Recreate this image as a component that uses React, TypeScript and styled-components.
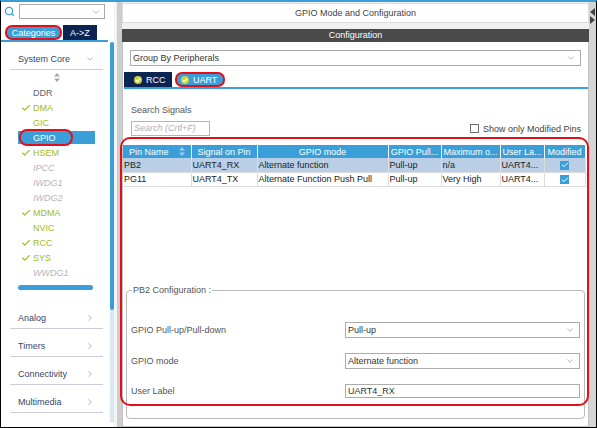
import styled, { createGlobalStyle, css } from 'styled-components';
import { Search, ChevronDown, ChevronRight, Check } from 'lucide-react';

const BLUE = '#3a9fd8';
const NAVY = '#0c2451';
const RED = '#e3101b';
const GREEN = '#9fba22';

const GlobalStyle = createGlobalStyle`
  body {
    margin: 0;
    font-family: "Liberation Sans", Arial, sans-serif;
    font-size: 9px;
  }
  * { box-sizing: border-box; }
`;

const Frame = styled.div`
  width: 597px;
  height: 428px;
  border: 1px solid #000;
  border-top: 2px solid ${BLUE};
  display: flex;
  background: #fff;
  overflow: hidden;
  color: #333;
`;

/* ---------- sidebar ---------- */

const Sidebar = styled.aside`
  width: 113px;
  flex-shrink: 0;
  display: flex;
  flex-direction: column;
`;

const SearchRow = styled.div`
  display: flex;
  align-items: center;
  gap: 4px;
  height: 17px;
  padding: 2px 0 0 3px;
`;

const SearchBox = styled.div`
  width: 86px;
  height: 15px;
  border: 1px solid #a9a9a9;
  display: flex;
  align-items: center;
  justify-content: flex-end;
  padding-right: 3px;
`;

const TabRow = styled.div`
  margin-top: 6px;
  width: 107px;
  display: flex;
  gap: 1px;
  padding-left: 4px;
  border-bottom: 2px solid ${BLUE};
`;

const SideTab = styled.div<{ $w: number; $active?: boolean; $marked?: boolean }>`
  width: ${p => p.$w}px;
  height: 15px;
  display: flex;
  align-items: center;
  justify-content: center;
  color: #fff;
  background: ${p => (p.$active ? BLUE : NAVY)};
  ${p =>
    p.$marked &&
    css`
      border: 2px solid ${RED};
      border-radius: 7px;
    `}
`;

const SideBody = styled.div`
  flex: 1;
  display: flex;
  min-height: 0;
`;

const SideList = styled.div`
  width: 107px;
  display: flex;
  flex-direction: column;
`;

const ScrollTrack = styled.div`
  width: 4px;
  margin: 0 0 4px 2px;
  background: #d7e7f3;
  border-radius: 2px;
`;

const ScrollThumb = styled.div`
  height: 268px;
  background: ${BLUE};
  border-radius: 2px;
`;

const GroupHeader = styled.div`
  height: 28px;
  margin: 0 5px 0 9px;
  padding: 6px 8px 0 8px;
  display: flex;
  align-items: center;
  justify-content: space-between;
  border-bottom: 1px solid #c9ced8;
  color: #37456a;
`;

const SortRow = styled.div`
  height: 15px;
  display: flex;
  align-items: center;
  justify-content: center;
  padding-left: 5px;
`;

type Tone = 'green' | 'gray' | 'off';

const Item = styled.div<{ $tone: Tone; $selected?: boolean }>`
  position: relative;
  height: 15px;
  width: 77px;
  margin-left: 17px;
  padding-left: 3px;
  display: flex;
  align-items: center;
  color: ${p => (p.$tone === 'green' ? GREEN : p.$tone === 'gray' ? '#5d6472' : '#b3b6bc')};
  font-style: ${p => (p.$tone === 'off' ? 'italic' : 'normal')};
  ${p =>
    p.$selected &&
    css`
      height: 13px;
      margin: 1px 0 1px 17px;
      background: ${BLUE};
      color: #fff;
      &::after {
        content: '';
        position: absolute;
        left: 1px;
        top: -2px;
        bottom: -2px;
        width: 50px;
        border: 2px solid ${RED};
        border-radius: 8px;
      }
    `}
`;

const CheckSlot = styled.span`
  width: 12px;
  display: flex;
  align-items: center;
`;

const HBar = styled.div`
  margin: 5px 0 11px 17px;
  width: 75px;
  height: 5px;
  border-radius: 3px;
  background: ${BLUE};
`;

const Splitter = styled.div`
  width: 8px;
  flex-shrink: 0;
  border-left: 3px solid #f4f4f4;
  background: #cdcdcd;
`;

/* ---------- main ---------- */

const MainCol = styled.main`
  flex: 1;
  display: flex;
  flex-direction: column;
  background: #f1f1f1;
`;

const TitleBar = styled.div`
  margin-top: 1px;
  height: 20px;
  background: #fff;
  border: 1px solid #dcdcdc;
  display: flex;
  align-items: center;
  justify-content: center;
  color: #444;
`;

const ConfigHead = styled.div`
  margin-top: 6px;
  height: 13px;
  background: #4a4a4a;
  color: #fff;
  text-align: center;
  line-height: 13px;
`;

const ConfigBody = styled.section`
  flex: 1;
  position: relative;
  display: flex;
  flex-direction: column;
  background: #fff;
  border: 1px solid #c3c3c3;
  border-top: 0;
`;

const SelectBox = styled.div<{ $h?: number }>`
  height: ${p => p.$h ?? 16}px;
  border: 1px solid #acacac;
  background: #fff;
  display: flex;
  align-items: center;
  justify-content: space-between;
  padding: 0 4px 0 2px;
  color: #333;
`;

const GroupSelect = styled(SelectBox)`
  margin: 8px 7px 0 7px;
`;

const PeriphTabs = styled.div`
  margin: 6px 0 0 1px;
  display: flex;
  gap: 3px;
  border-bottom: 2px solid ${BLUE};
`;

const PTab = styled.div<{ $active?: boolean; $marked?: boolean; $pad: number }>`
  width: ${p => (p.$marked ? 50 : 48)}px;
  height: 15px;
  display: flex;
  align-items: center;
  gap: 4px;
  padding-left: ${p => p.$pad}px;
  color: #fff;
  background: ${p => (p.$active ? BLUE : NAVY)};
  ${p =>
    p.$marked &&
    css`
      border: 2px solid ${RED};
      border-radius: 7px;
    `}
`;

const SearchArea = styled.div`
  margin-top: 15px;
  padding: 0 7px 0 8px;
  display: flex;
  justify-content: space-between;
  align-items: flex-end;
`;

const SearchLabel = styled.div`
  line-height: 12px;
  color: #555;
`;

const SearchInput = styled.div`
  margin-top: 5px;
  width: 79px;
  height: 15px;
  border: 1px solid #b5b5b5;
  padding-left: 2px;
  line-height: 13px;
  color: #b0b0b0;
  font-style: italic;
`;

const CheckLabel = styled.div`
  height: 15px;
  display: flex;
  align-items: center;
  gap: 4px;
  color: #444;
`;

const EmptyBox = styled.span`
  width: 9px;
  height: 9px;
  border: 1px solid #6e6e6e;
  background: #fff;
`;

const Grid = styled.table`
  margin-top: 9px;
  width: 462px;
  border-collapse: collapse;
  table-layout: fixed;
`;

const Th = styled.th`
  height: 13px;
  padding: 0 2px;
  background: ${BLUE};
  color: #fff;
  font-weight: normal;
  text-align: center;
  border-right: 1px solid #fff;
  white-space: nowrap;
  overflow: hidden;
`;

const HeadInner = styled.span`
  display: inline-flex;
  align-items: center;
  gap: 10px;
`;

const Tr = styled.tr<{ $selected?: boolean }>`
  background: ${p => (p.$selected ? '#bacfe6' : '#fff')};
`;

const Td = styled.td<{ $center?: boolean }>`
  height: 14px;
  padding: 0 1px;
  border-right: 1px solid #dcdcdc;
  border-bottom: 1px solid #dcdcdc;
  white-space: nowrap;
  overflow: hidden;
  color: #222;
  text-align: ${p => (p.$center ? 'center' : 'left')};
`;

const BlueCheck = styled.span`
  display: inline-flex;
  align-items: center;
  justify-content: center;
  width: 9px;
  height: 9px;
  background: ${BLUE};
  vertical-align: middle;
`;

const Fieldset = styled.fieldset`
  margin: auto 3px 7px 3px;
  border: 1px solid #b9b9b9;
  border-radius: 4px;
  padding: 26px 4px 20px 4px;
  display: flex;
  flex-direction: column;
  gap: 15px;
`;

const Legend = styled.legend`
  margin-left: 1px;
  padding: 0 1px;
  line-height: 12px;
  color: #555;
`;

const FieldRow = styled.div`
  display: flex;
  align-items: center;
`;

const FieldLabel = styled.span`
  width: 214px;
  color: #555;
`;

const TextField = styled(SelectBox)`
  flex: 1;
`;

const RedFrame = styled.div`
  position: absolute;
  left: -3px;
  top: 95px;
  width: 469px;
  height: 269px;
  border: 2px solid ${RED};
  border-radius: 10px;
  pointer-events: none;
`;

const RightRail = styled.div`
  width: 7px;
  flex-shrink: 0;
  background: #d5d5d5;
  padding-top: 5px;
`;

/* ---------- small drawings ---------- */

const SortGlyph = ({ color }: { color: string }) => (
  <svg width="6" height="9" viewBox="0 0 6 9">
    <path d="M3 0 L6 3.5 H0 Z" fill={color} />
    <path d="M3 9 L6 5.5 H0 Z" fill={color} />
  </svg>
);

const TabDot = () => (
  <svg width="8" height="8" viewBox="0 0 8 8">
    <circle cx="4" cy="4" r="4" fill="#cbd43c" />
    <path d="M2 4.2 L3.4 5.6 L6 2.8" stroke="#fff" strokeWidth="1.3" fill="none" />
  </svg>
);

const Chev = () => <ChevronDown size={10} strokeWidth={1.5} color="#888" />;

const sideItems: { name: string; tone: Tone; checked?: boolean; selected?: boolean }[] = [
  { name: 'DDR', tone: 'gray' },
  { name: 'DMA', tone: 'green', checked: true },
  { name: 'GIC', tone: 'green' },
  { name: 'GPIO', tone: 'green', selected: true },
  { name: 'HSEM', tone: 'green', checked: true },
  { name: 'IPCC', tone: 'off' },
  { name: 'IWDG1', tone: 'off' },
  { name: 'IWDG2', tone: 'off' },
  { name: 'MDMA', tone: 'green', checked: true },
  { name: 'NVIC', tone: 'green' },
  { name: 'RCC', tone: 'green', checked: true },
  { name: 'SYS', tone: 'green', checked: true },
  { name: 'WWDG1', tone: 'off' },
];

const groups = ['Analog', 'Timers', 'Connectivity', 'Multimedia'];

const columns = [
  { label: 'Pin Name', w: 68 },
  { label: 'Signal on Pin', w: 66 },
  { label: 'GPIO mode', w: 131 },
  { label: 'GPIO Pull...', w: 53 },
  { label: 'Maximum o...', w: 59 },
  { label: 'User La...', w: 44 },
  { label: 'Modified', w: 41 },
];

const rows = [
  ['PB2', 'UART4_RX', 'Alternate function', 'Pull-up', 'n/a', 'UART4...'],
  ['PG11', 'UART4_TX', 'Alternate Function Push Pull', 'Pull-up', 'Very High', 'UART4...'],
];

export default function App() {
  return (
    <>
      <GlobalStyle />
      <Frame>
        <Sidebar>
          <SearchRow>
            <Search size={11} strokeWidth={2.6} color={BLUE} />
            <SearchBox>
              <Chev />
            </SearchBox>
          </SearchRow>
          <TabRow>
            <SideTab $w={57} $active $marked>Categories</SideTab>
            <SideTab $w={34}>A-&gt;Z</SideTab>
          </TabRow>
          <SideBody>
            <SideList>
              <GroupHeader>
                <span>System Core</span>
                <Chev />
              </GroupHeader>
              <SortRow>
                <SortGlyph color="#a7a7a7" />
              </SortRow>
              {sideItems.map(it => (
                <Item key={it.name} $tone={it.tone} $selected={it.selected}>
                  <CheckSlot>
                    {it.checked && <Check size={10} strokeWidth={2.6} color={GREEN} />}
                  </CheckSlot>
                  {it.name}
                </Item>
              ))}
              <HBar />
              {groups.map(g => (
                <GroupHeader key={g}>
                  <span>{g}</span>
                  <ChevronRight size={10} strokeWidth={1.5} color="#888" />
                </GroupHeader>
              ))}
            </SideList>
            <ScrollTrack>
              <ScrollThumb />
            </ScrollTrack>
          </SideBody>
        </Sidebar>

        <Splitter />

        <MainCol>
          <TitleBar>GPIO Mode and Configuration</TitleBar>
          <ConfigHead>Configuration</ConfigHead>
          <ConfigBody>
            <GroupSelect>
              <span>Group By Peripherals</span>
              <Chev />
            </GroupSelect>
            <PeriphTabs>
              <PTab $pad={10}>
                <TabDot />
                RCC
              </PTab>
              <PTab $pad={4} $active $marked>
                <TabDot />
                UART
              </PTab>
            </PeriphTabs>

            <SearchArea>
              <div>
                <SearchLabel>Search Signals</SearchLabel>
                <SearchInput>Search (Crtl+F)</SearchInput>
              </div>
              <CheckLabel>
                <EmptyBox />
                Show only Modified Pins
              </CheckLabel>
            </SearchArea>

            <Grid>
              <colgroup>
                {columns.map(c => (
                  <col key={c.label} style={{ width: c.w }} />
                ))}
              </colgroup>
              <thead>
                <tr>
                  {columns.map((c, i) => (
                    <Th key={c.label}>
                      {i === 0 ? (
                        <HeadInner>
                          {c.label}
                          <SortGlyph color="#9fcfee" />
                        </HeadInner>
                      ) : (
                        c.label
                      )}
                    </Th>
                  ))}
                </tr>
              </thead>
              <tbody>
                {rows.map((r, ri) => (
                  <Tr key={r[0]} $selected={ri === 0}>
                    {r.map((cell, ci) => (
                      <Td key={ci}>{cell}</Td>
                    ))}
                    <Td $center>
                      <BlueCheck>
                        <Check size={8} strokeWidth={3} color="#fff" />
                      </BlueCheck>
                    </Td>
                  </Tr>
                ))}
              </tbody>
            </Grid>

            <Fieldset>
              <Legend>PB2 Configuration :</Legend>
              <FieldRow>
                <FieldLabel>GPIO Pull-up/Pull-down</FieldLabel>
                <TextField>
                  <span>Pull-up</span>
                  <Chev />
                </TextField>
              </FieldRow>
              <FieldRow>
                <FieldLabel>GPIO mode</FieldLabel>
                <TextField>
                  <span>Alternate function</span>
                  <Chev />
                </TextField>
              </FieldRow>
              <FieldRow>
                <FieldLabel>User Label</FieldLabel>
                <TextField $h={14}>
                  <span>UART4_RX</span>
                </TextField>
              </FieldRow>
            </Fieldset>

            <RedFrame />
          </ConfigBody>
        </MainCol>

        <RightRail>
          <svg width="7" height="18" viewBox="0 0 7 18">
            <path d="M6 1 L1 5 L6 9 Z" fill="#444" />
            <path d="M1 9 L6 13 L1 17 Z" fill="#444" />
          </svg>
        </RightRail>
      </Frame>
    </>
  );
}
